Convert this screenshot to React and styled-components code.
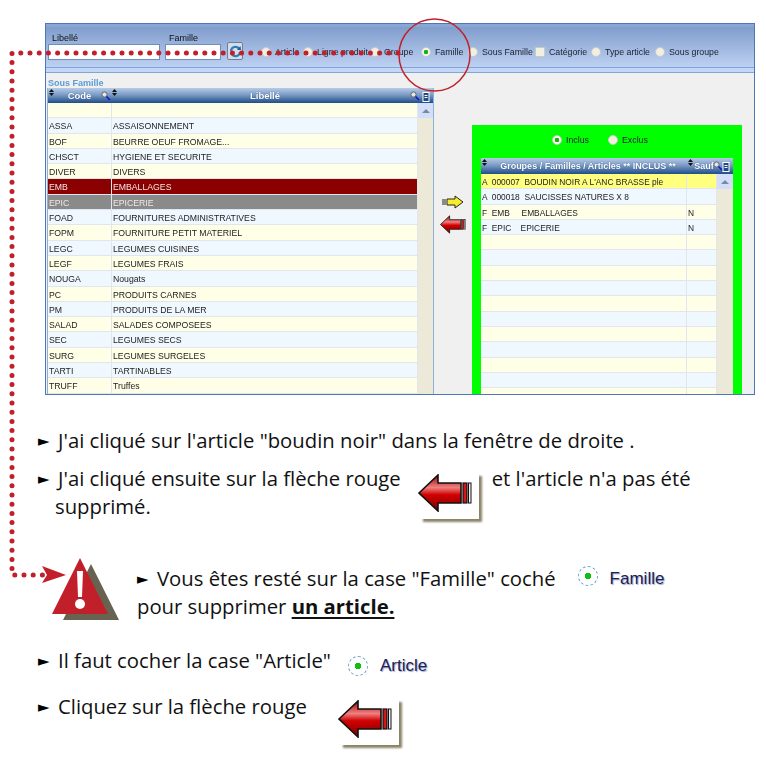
import React from "react";
import styled, { createGlobalStyle } from "styled-components";

const familles = [
  ["", ""],
  ["ASSA", "ASSAISONNEMENT"],
  ["BOF", "BEURRE OEUF FROMAGE..."],
  ["CHSCT", "HYGIENE ET SECURITE"],
  ["DIVER", "DIVERS"],
  ["EMB", "EMBALLAGES", "selected"],
  ["EPIC", "EPICERIE", "grey"],
  ["FOAD", "FOURNITURES ADMINISTRATIVES"],
  ["FOPM", "FOURNITURE PETIT MATERIEL"],
  ["LEGC", "LEGUMES CUISINES"],
  ["LEGF", "LEGUMES FRAIS"],
  ["NOUGA", "Nougats"],
  ["PC", "PRODUITS CARNES"],
  ["PM", "PRODUITS DE LA MER"],
  ["SALAD", "SALADES COMPOSEES"],
  ["SEC", "LEGUMES SECS"],
  ["SURG", "LEGUMES SURGELES"],
  ["TARTI", "TARTINABLES"],
  ["TRUFF", "Truffes"],
];

const inclus = [
  ["A  000007  BOUDIN NOIR A L'ANC BRASSE ple", "", "yellow"],
  ["A  000018  SAUCISSES NATURES X 8", ""],
  ["F  EMB     EMBALLAGES", "N"],
  ["F  EPIC    EPICERIE", "N"],
  ["", ""], ["", ""], ["", ""], ["", ""], ["", ""], ["", ""], ["", ""], ["", ""], ["", ""], ["", ""], ["", ""],
];

const options = [
  ["Article", false, 42],
  ["Ligne produit", false, 67],
  ["Groupe", false, 51],
  ["Famille", true, 47],
  ["Sous Famille", false, 67],
  ["Catégorie", false, 56, true],
  ["Type article", false, 64],
  ["Sous groupe", false, 60],
];

const GlobalStyle = createGlobalStyle`
  html, body { margin: 0; padding: 0; background: #fff; }
`;

const Page = styled.div`
  position: relative;
  width: 766px;
  height: 767px;
  overflow: hidden;
  padding: 23px 0 0 45px;
  box-sizing: border-box;
  font-family: "Liberation Sans", Arial, sans-serif;
`;

const Overlay = styled.svg`
  position: absolute;
  left: 0;
  top: 0;
  pointer-events: none;
`;

const Window = styled.div`
  width: 710px;
  height: 372px;
  box-sizing: border-box;
  border: 1px solid #4a78b8;
  background: #f0f0f0;
  overflow: hidden;
  filter: blur(0.3px);
`;

const TopBand = styled.div`
  height: 44px;
  box-sizing: border-box;
  display: flex;
  align-items: flex-end;
  padding: 0 0 7px 2px;
  background: linear-gradient(#809dcc, #bdd1f2);
  border-top: 3px solid #8aa6d3;
  border-bottom: 1px solid #7ea6da;
`;

const SubBand = styled.div`
  height: 4px;
  background: #c3d6f3;
  border-bottom: 1px solid #7ea6da;
`;

const Field = styled.div`
  width: ${(p) => p.$w}px;
  flex: none;
  margin-right: 5px;
  display: flex;
  flex-direction: column;
`;

const FieldLabel = styled.span`
  font-size: 9px;
  color: #111;
  padding-left: 4px;
  height: 11px;
  line-height: 11px;
`;

const FieldInput = styled.div`
  height: 16px;
  background: #fff;
  border: 1px solid #6d8fbf;
  box-sizing: border-box;
`;

const RefreshButton = styled.div`
  width: 16px;
  height: 18px;
  flex: none;
  box-sizing: border-box;
  margin: 0 18px 0 1px;
  border: 1px solid #6b7f99;
  border-radius: 2px;
  background: #d4dde8;
  display: flex;
  align-items: center;
  justify-content: center;
`;

const Options = styled.div`
  display: flex;
  align-items: center;
  height: 18px;
  padding-top: 1px;
  box-sizing: border-box;
`;

const Option = styled.div`
  display: flex;
  align-items: center;
  flex: none;
  width: ${(p) => p.$w}px;
  white-space: nowrap;
  font-size: 8.8px;
  color: #223;
`;

const RadioDot = styled.span`
  width: 8px;
  height: 8px;
  margin-right: 4px;
  border-radius: ${(p) => (p.$square ? "1px" : "50%")};
  border: 1px solid #c8ccc0;
  background: ${(p) =>
    p.$on ? "radial-gradient(circle, #12b312 0 2px, #f4f4ee 2.5px)" : "#f1efe2"};
  flex: none;
`;

const Body = styled.div`
  display: flex;
  align-items: flex-start;
  padding-left: 1px;
`;

const LeftPane = styled.div`
  width: 387px;
  flex: none;
  padding-top: 6px;
`;

const SectionTitle = styled.div`
  font-size: 9px;
  font-weight: bold;
  color: #5c9bd6;
  height: 9px;
  line-height: 9px;
  padding: 0 0 0 1px;
`;

const Grid = styled.div`
  border-left: 1px solid #8fb0d8;
  border-right: 1px solid #8fb0d8;
`;

const GridHead = styled.div`
  height: ${(p) => p.$h}px;
  display: flex;
  color: #fff;
  font-size: ${(p) => p.$fs}px;
  font-weight: bold;
  line-height: ${(p) => p.$h + 1}px;
  text-shadow: 0 0 1px #1d3f70;
  background: linear-gradient(#b7cbe6, #7c9cc6 45%, #1f4d88);
`;

const HeadCell = styled.div`
  width: ${(p) => p.$w}px;
  flex: ${(p) => (p.$w ? "none" : "1")};
  box-sizing: border-box;
  padding: ${(p) => p.$pad || "0"};
  position: relative;
  text-align: center;
  white-space: nowrap;
`;

const SortIcon = styled.svg`
  position: absolute;
  left: 1px;
  top: 1px;
`;

const HeadIcon = styled.svg`
  position: absolute;
  right: ${(p) => p.$r}px;
  top: 3px;
`;

const GridMain = styled.div`
  display: flex;
`;

const Rows = styled.div`
  flex: 1;
  min-width: 0;
`;

const rowBg = (p) => {
  if (p.$kind === "selected") return "#8b0000";
  if (p.$kind === "grey") return "#8a8a8a";
  if (p.$kind === "yellow") return "#ffff80";
  return p.$odd ? "#f0f8ff" : "#ffffe8";
};

const Row = styled.div`
  display: flex;
  height: 15.3px;
  box-sizing: border-box;
  border-bottom: 1px solid #dfe6ee;
  font-size: ${(p) => p.$fs}px;
  line-height: 16px;
  white-space: pre;
  background: ${rowBg};
  color: ${(p) => (p.$kind === "selected" || p.$kind === "grey" ? "#f2e6e6" : "#222")};
`;

const Cell = styled.div`
  width: ${(p) => p.$w}px;
  flex: ${(p) => (p.$w ? "none" : "1")};
  box-sizing: border-box;
  padding-left: 1px;
  overflow: hidden;
  border-right: 1px solid #e2e6ea;
`;

const ScrollBar = styled.div`
  width: ${(p) => p.$w}px;
  flex: none;
  background: #ece9d8;
`;

const ScrollButton = styled.div`
  height: 15px;
  background: #d3def8;
  display: flex;
  align-items: center;
  justify-content: center;

  &::before {
    content: "";
    border-left: 4px solid transparent;
    border-right: 4px solid transparent;
    border-bottom: 4px solid #7b8aa3;
  }
`;

const ArrowColumn = styled.div`
  width: 38px;
  flex: none;
  padding-top: 122px;
  display: flex;
  flex-direction: column;
  align-items: center;
  gap: 6px;
`;

const GreenPanel = styled.div`
  width: 270px;
  height: 270px;
  flex: none;
  margin-top: 52px;
  box-sizing: border-box;
  background: #00ff00;
  padding: 3px 9px 0;
`;

const GreenChoices = styled.div`
  height: 30px;
  box-sizing: border-box;
  padding: 0 0 6px 71px;
  display: flex;
  align-items: center;
`;

const Instructions = styled.div`
  font-family: "Open Sans", "Noto Sans", sans-serif;
  font-size: 20.3px;
  line-height: 28px;
  color: #111;
  margin-left: -7px;
`;

const Bullet = styled.span`
  display: inline-block;
  width: 20px;
  font-family: "DejaVu Sans", sans-serif;
  font-size: 15px;
  line-height: 1;
  vertical-align: 2px;
  color: #000;
`;

const Line = styled.div`
  white-space: nowrap;
  height: 28px;
  margin-top: ${(p) => p.$top}px;
`;

const ArrowRow = styled.div`
  display: flex;
  align-items: flex-start;
  margin-top: ${(p) => p.$top}px;
`;

const Column = styled.div`
  white-space: nowrap;
`;

const Indent = styled.div`
  padding-left: 17px;
`;

const ArrowCard = styled.div`
  width: 59px;
  height: 46px;
  margin: ${(p) => p.$m};
  flex: none;
  box-sizing: border-box;
  padding-top: 1px;
  background: #fff;
  box-shadow: 3px 3px 2px #8a8468;

  svg {
    margin-left: -2px;
  }
`;

const WarningRow = styled.div`
  display: flex;
  align-items: flex-start;
  margin: 38px 0 0 14px;
`;

const WarningText = styled.div`
  margin-left: 17px;
  padding-top: 5px;
  line-height: 29px;
  white-space: nowrap;
`;

const WarningLine = styled.div`
  height: 29px;
`;

const Strong = styled.span`
  font-weight: bold;
  text-decoration: underline;
  text-decoration-thickness: 2px;
  text-underline-offset: 3px;
`;

const Chip = styled.span`
  display: inline-flex;
  align-items: center;
  margin-left: ${(p) => p.$left}px;
  vertical-align: ${(p) => p.$drop}px;
  font-family: "Liberation Sans", Arial, sans-serif;
  font-size: 17px;
  line-height: 20px;
  color: #1f2050;
  text-shadow: 1px 1px 1px #8fa8d8;
`;

const ChipLabel = styled.span`
  margin-top: ${(p) => p.$top}px;
`;

const ChipRadio = styled.span`
  width: 20px;
  height: 20px;
  box-sizing: border-box;
  margin-right: 12px;
  border-radius: 50%;
  border: 1px dashed #5f97d2;
  background: radial-gradient(circle, #10c010 0 3px, #fff 3.5px);
`;

const RedArrow = ({ width = 54, height = 38 }) => (
  <svg width={width} height={height} viewBox="0 0 54 38">
    <defs>
      <linearGradient id="redFill" x1="0" y1="0" x2="0" y2="1">
        <stop offset="0" stopColor="#a00000" />
        <stop offset="0.35" stopColor="#f08080" />
        <stop offset="0.55" stopColor="#d00000" />
        <stop offset="1" stopColor="#800000" />
      </linearGradient>
    </defs>
    <path d="M1 19 L20 1 V9 H43 V29 H20 V37 Z" fill="url(#redFill)" stroke="#111" strokeWidth="1.6" />
    <rect x="45" y="9" width="4" height="20" fill="#d01818" stroke="#111" strokeWidth="1.2" />
    <rect x="50.5" y="9" width="2.5" height="20" fill="#eee" stroke="#111" strokeWidth="1" />
  </svg>
);

const YellowArrow = () => (
  <svg width="22" height="14" viewBox="0 0 22 14">
    <path d="M21 7 L13 1 V4 H5 V10 H13 V13 Z" fill="#f6ee2a" stroke="#222" strokeWidth="1" />
    <path d="M1 4 V10 M3 4 V10" stroke="#222" strokeWidth="1" />
  </svg>
);

const Sort = () => (
  <SortIcon width="5" height="7" viewBox="0 0 5 7">
    <path d="M2.5 0 L5 3 H0 Z M2.5 7 L5 4 H0 Z" fill="#111" />
  </SortIcon>
);

const Loupe = ({ right }) => (
  <HeadIcon $r={right} width="10" height="10" viewBox="0 0 10 10">
    <circle cx="3.5" cy="3.5" r="2.6" fill="#dfe6ee" stroke="#666" />
    <path d="M5.5 5.5 L9 9" stroke="#1414c8" strokeWidth="1.6" />
  </HeadIcon>
);

const Clipboard = ({ right }) => (
  <HeadIcon $r={right} width="8" height="11" viewBox="0 0 8 11">
    <rect x="1" y="1.5" width="6" height="9" fill="#1f4d88" stroke="#fff" />
    <path d="M2.5 4.5 H5.5 M2.5 6.5 H5.5" stroke="#fff" />
  </HeadIcon>
);

const App = () => {
  return (
    <Page>
      <GlobalStyle />
      <Window>
        <TopBand>
          <Field $w={112}>
            <FieldLabel>Libellé</FieldLabel>
            <FieldInput />
          </Field>
          <Field $w={56}>
            <FieldLabel>Famille</FieldLabel>
            <FieldInput />
          </Field>
          <RefreshButton>
            <svg width="13" height="13" viewBox="0 0 13 13">
              <path d="M2 6 A4.5 4.5 0 0 1 10 3.5" fill="none" stroke="#2c7fb8" strokeWidth="2.2" />
              <path d="M11 7 A4.5 4.5 0 0 1 3 9.5" fill="none" stroke="#2c7fb8" strokeWidth="2.2" />
              <path d="M8 5 L12 5 L11.5 1 Z" fill="#1b5f8c" />
            </svg>
          </RefreshButton>
          <Options>
            {options.map(([label, on, w, square]) => (
              <Option key={label} $w={w}>
                <RadioDot $on={on} $square={square} />
                {label}
              </Option>
            ))}
          </Options>
        </TopBand>
        <SubBand />
        <Body>
          <LeftPane>
            <SectionTitle>Sous Famille</SectionTitle>
            <Grid>
              <GridHead $h={15} $fs={9.5}>
                <HeadCell $w={63}>
                  <Sort />
                  Code
                  <Loupe right={0} />
                </HeadCell>
                <HeadCell $pad="0 14px 0 0">
                  <Sort />
                  Libellé
                  <Loupe right={13} />
                  <Clipboard right={3} />
                </HeadCell>
              </GridHead>
              <GridMain>
                <Rows>
                  {familles.map(([code, libelle, kind], i) => (
                    <Row key={i} $fs={8.7} $odd={i % 2 === 1} $kind={kind}>
                      <Cell $w={64}>{code}</Cell>
                      <Cell>{libelle}</Cell>
                    </Row>
                  ))}
                </Rows>
                <ScrollBar $w={15}>
                  <ScrollButton />
                </ScrollBar>
              </GridMain>
            </Grid>
          </LeftPane>
          <ArrowColumn>
            <YellowArrow />
            <RedArrow width={26} height={19} />
          </ArrowColumn>
          <GreenPanel>
            <GreenChoices>
              <Option $w={56}>
                <RadioDot $on />
                Inclus
              </Option>
              <Option $w={40}>
                <RadioDot />
                Exclus
              </Option>
            </GreenChoices>
            <GridHead $h={16} $fs={9}>
              <HeadCell $w={206} $pad="0 0 0 8px">
                <Sort />
                Groupes / Familles / Articles ** INCLUS **
              </HeadCell>
              <HeadCell $pad="0 12px 0 0">
                <Sort />
                Sauf
                <Loupe right={10} />
                <Clipboard right={3} />
              </HeadCell>
            </GridHead>
            <GridMain>
              <Rows>
                {inclus.map(([text, sauf, kind], i) => (
                  <Row key={i} $fs={8.4} $odd={i % 2 === 1} $kind={kind}>
                    <Cell $w={206}>{text}</Cell>
                    <Cell>{sauf}</Cell>
                  </Row>
                ))}
              </Rows>
              <ScrollBar $w={16}>
                <ScrollButton />
              </ScrollBar>
            </GridMain>
          </GreenPanel>
        </Body>
      </Window>

      <Instructions>
        <Line $top={31}>
          <Bullet>►</Bullet>J'ai cliqué sur l'article "boudin noir" dans la fenêtre de droite .
        </Line>
        <ArrowRow $top={10}>
          <Column>
            <div>
              <Bullet>►</Bullet>J'ai cliqué ensuite sur la flèche rouge
            </div>
            <Indent>supprimé.</Indent>
          </Column>
          <ArrowCard $m="9px 13px 0 19px">
            <RedArrow />
          </ArrowCard>
          <Column>et l'article n'a pas été</Column>
        </ArrowRow>
        <WarningRow>
          <svg width="68" height="63" viewBox="0 0 68 63">
            <path d="M39 6 L67 62 H11 Z" fill="#686250" />
            <path d="M28 0 L56 56 H0 Z" fill="#c1202b" />
            <path d="M25 13 H31 L30 39 H26 Z" fill="#fff" />
            <circle cx="28" cy="46" r="5" fill="#fff" />
          </svg>
          <WarningText>
            <WarningLine>
              <Bullet>►</Bullet>Vous êtes resté sur la case "Famille" coché
              <Chip $left={22} $drop={0}>
                <ChipRadio />
                <ChipLabel $top={6}>Famille</ChipLabel>
              </Chip>
            </WarningLine>
            <WarningLine>
              pour supprimer <Strong>un article.</Strong>
            </WarningLine>
          </WarningText>
        </WarningRow>
        <Line $top={25}>
          <Bullet>►</Bullet>Il faut cocher la case "Article"
          <Chip $left={17} $drop={-8}>
            <ChipRadio />
            <ChipLabel $top={0}>Article</ChipLabel>
          </Chip>
        </Line>
        <ArrowRow $top={18}>
          <Column>
            <Bullet>►</Bullet>Cliquez sur la flèche rouge
          </Column>
          <ArrowCard $m="7px 0 0 33px">
            <RedArrow />
          </ArrowCard>
        </ArrowRow>
      </Instructions>

      <Overlay width="766" height="767" viewBox="0 0 766 767">
        <path
          d="M398 53 H12 V575 H46"
          fill="none"
          stroke="#c1202b"
          strokeWidth="5"
          strokeLinecap="round"
          strokeDasharray="0 9.2"
        />
        <path d="M42 566 L66 575 L42 583 L47 575 Z" fill="#c1202b" />
        <ellipse cx="434.5" cy="55" rx="35.5" ry="36" fill="none" stroke="#c1202b" strokeWidth="1.5" />
      </Overlay>
    </Page>
  );
};

export default App;
